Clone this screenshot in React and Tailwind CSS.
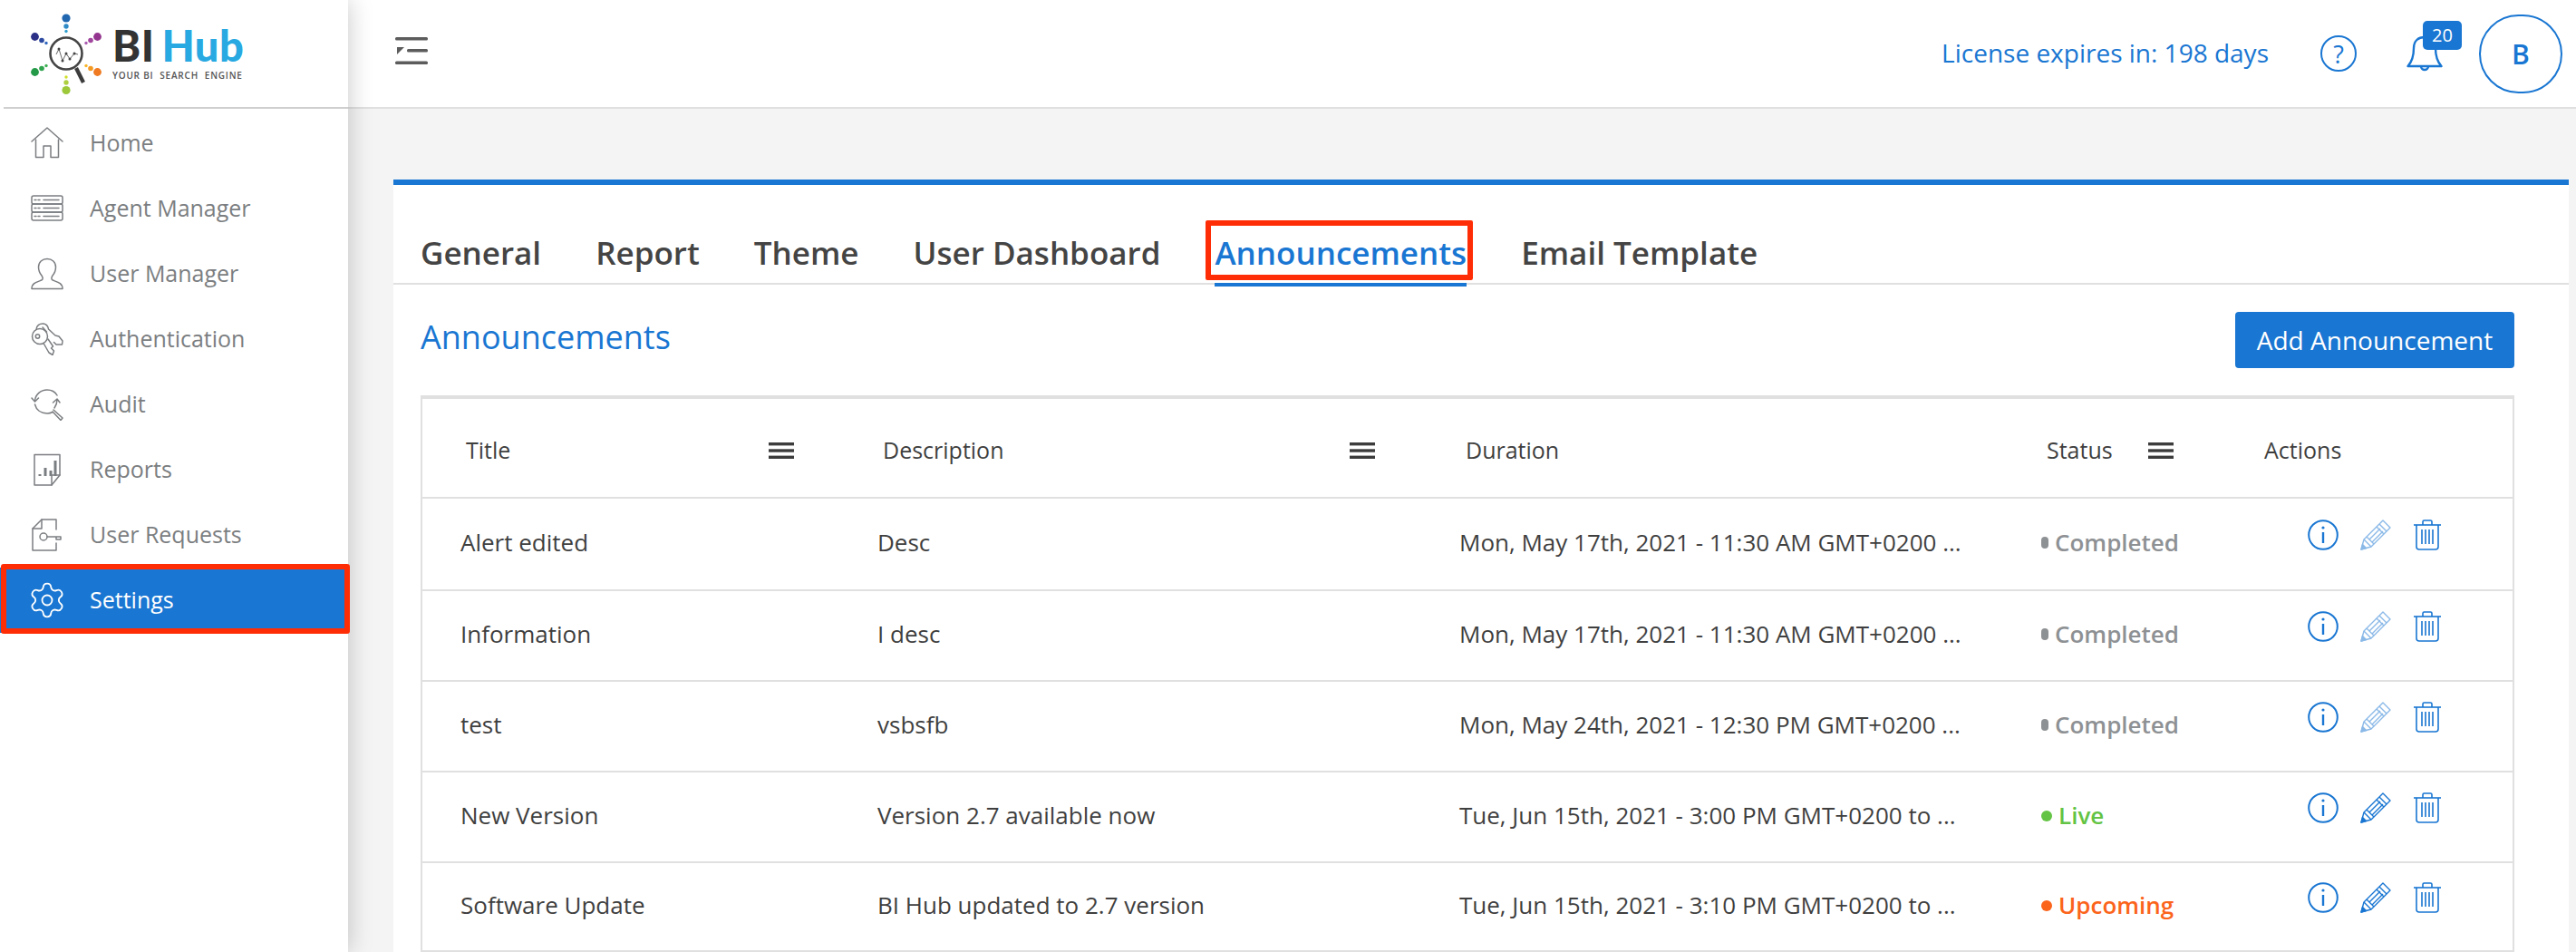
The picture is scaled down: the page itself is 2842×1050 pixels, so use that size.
import React from "react";
import { Settings } from "lucide-react";

const S = { fill: "none", stroke: "#7b7e81", strokeWidth: 1.5, strokeLinecap: "round", strokeLinejoin: "round" };

const Home = () => (
  <svg width="36" height="36" viewBox="0 0 36 36" {...S}>
    <path d="M1 16 L18 1 L35 16" />
    <path d="M5.5 14 V33.5 H14 V21 H22 V33.5 H30.5 V14" />
  </svg>
);
const Agent = () => (
  <svg width="36" height="36" viewBox="0 0 36 36" {...S}>
    <rect x="1" y="4" width="34" height="9" rx="2" />
    <rect x="1" y="13" width="34" height="9" rx="2" />
    <rect x="1" y="22" width="34" height="9" rx="2" />
    <path d="M4 8.5h2M8 8.5h2M14 8.5h17M4 17.5h2M8 17.5h2M14 17.5h17M4 26.5h2M8 26.5h2M14 26.5h17" />
  </svg>
);
const UserI = () => (
  <svg width="36" height="36" viewBox="0 0 36 36" {...S}>
    <path d="M1 34.5 C1 28 7 27 12 25 C13.5 24 13.5 22 12 20 C9.5 17 8.5 14 8.5 10.5 C8.5 5 12.5 1.5 18 1.5 C23.5 1.5 27.5 5 27.5 10.5 C27.5 14 26.5 17 24 20 C22.5 22 22.5 24 24 25 C29 27 35 28 35 34.5 Z" />
  </svg>
);
const Keys = () => (
  <svg width="36" height="36" viewBox="0 0 36 36" {...S}>
    <circle cx="10" cy="15" r="8.5" />
    <circle cx="7.5" cy="15" r="2.2" />
    <path d="M14 22.5 L20 33 L24 35.5 L25.5 31 L22.5 28 L24.5 26 L19 18" />
    <path d="M6 7.5 C6 3 10 0.5 14 1 C17 1.5 19 4 19.5 7 L27 14 L31 15 L35 20 L34.5 24 L28 24 L25.5 21.5" />
    <path d="M13 5 L17.5 10" />
  </svg>
);
const Audit = () => (
  <svg width="36" height="36" viewBox="0 0 36 36" {...S}>
    <path d="M4.5 14 C5 7 11 2 18 2 C23 2 27 4.5 29 8" />
    <path d="M1 11 L4.5 15 L8.5 11" />
    <path d="M4.5 18 C6 24 11 28 18 28 C20 28 22 27.5 24 26.5" />
    <path d="M26 22 C28 19 29 16 29 13" />
    <path d="M24.5 16 L29 12 L32 16" />
    <path d="M25 24 L35 33 L33 35.5 L24 26" />
  </svg>
);
const Reports = () => (
  <svg width="36" height="36" viewBox="0 0 36 36" {...S}>
    <path d="M4 1.5 H32 V24 L23 35 H4 Z" />
    <path d="M32 24 H23 V35" />
    <g strokeWidth="3" strokeLinecap="butt">
      <path d="M10 23v2M16 16v9M22 19v6M27 8v17" />
    </g>
  </svg>
);
const Requests = () => (
  <svg width="36" height="36" viewBox="0 0 36 36" {...S}>
    <path d="M28 12 V1 H12 L2 11 V35 H28 V27" />
    <path d="M12 1 V11 H2" />
    <circle cx="14" cy="20" r="4" />
    <path d="M18 20 H33 V23 H28 V20" />
  </svg>
);

const MiniBars = () => (
  <svg width="28" height="18" viewBox="0 0 28 18" fill="#3c3c3c">
    <rect width="28" height="3.4" y="0" />
    <rect width="28" height="3.4" y="7.3" />
    <rect width="28" height="3.4" y="14.6" />
  </svg>
);

const Info = () => (
  <svg width="34" height="34" viewBox="0 0 34 34" fill="none" stroke="#1976d2" strokeWidth="2">
    <circle cx="17" cy="17" r="15.8" />
    <path d="M17 14v12" strokeWidth="2.4" />
    <circle cx="17" cy="9" r="1.6" fill="#1976d2" stroke="none" />
  </svg>
);
const Pencil = ({ faded }) => (
  <svg width="34" height="34" viewBox="0 0 34 34" fill="none" stroke="#1976d2" strokeWidth="1.4" strokeLinejoin="round" className={faded ? "opacity-50" : ""}>
    <path d="M1 33 L4 22 L25 1 L33 9 L12 30 Z" />
    <path d="M21 5 L29 13 M4 22 L12 30 M7 19 L15 27 M18 8 L26 16 M10 22 L22 10 M13 25 L25 13" />
    <path d="M1 33 L2.5 27.5 L6.5 31.5 Z" fill="#1976d2" />
  </svg>
);
const Trash = () => (
  <svg width="30" height="34" viewBox="0 0 30 34" fill="none" stroke="#1976d2" strokeWidth="1.6" strokeLinejoin="round">
    <path d="M0 6 H30" />
    <path d="M10 6 V2.5 Q10 1 11.5 1 H18.5 Q20 1 20 2.5 V6" />
    <path d="M3 6 V30 Q3 33 6 33 H24 Q27 33 27 30 V6" />
    <path d="M9 11 V27 M13 11 V27 M17 11 V27 M21 11 V27" />
  </svg>
);

const Logo = () => (
  <svg width="82" height="92" viewBox="33 14 82 92" fill="none">
    <circle cx="73" cy="20" r="4.6" fill="#2167b0" />
    <circle cx="73" cy="29" r="2.7" fill="#2f8ac6" />
    <circle cx="73" cy="34.5" r="1.7" fill="#2fa0cf" />
    <circle cx="38.5" cy="40.5" r="4.4" fill="#2b2f86" />
    <circle cx="46" cy="44.5" r="2.8" fill="#2c4aa0" />
    <circle cx="51" cy="47.5" r="1.7" fill="#2f66bd" />
    <circle cx="107.5" cy="40.5" r="4.4" fill="#93358f" />
    <circle cx="100" cy="44.5" r="2.8" fill="#a2479f" />
    <circle cx="95" cy="47.5" r="1.7" fill="#aa5bb0" />
    <circle cx="38.5" cy="79.5" r="4.4" fill="#249a48" />
    <circle cx="46" cy="75.5" r="2.8" fill="#2fa44d" />
    <circle cx="51" cy="72.5" r="1.7" fill="#3eb054" />
    <circle cx="107.5" cy="79.5" r="4.4" fill="#ef7a21" />
    <circle cx="100" cy="75.5" r="2.8" fill="#f39a23" />
    <circle cx="95" cy="72.5" r="1.7" fill="#f7b52a" />
    <circle cx="73" cy="99.5" r="4.6" fill="#9cc83a" />
    <circle cx="73" cy="91" r="2.7" fill="#aed040" />
    <circle cx="73" cy="85" r="1.7" fill="#d0df2a" />
    <circle cx="73" cy="59" r="17.5" stroke="#444" strokeWidth="2.6" />
    <path d="M84 75 L92 91" stroke="#3c3c3c" strokeWidth="4.4" />
    <path d="M62 60 L65 54 L69 67 L73 59 L77 65 L82 59 L86 60" stroke="#555" strokeWidth="0.9" />
    <g fill="#444">
      <circle cx="65" cy="54" r="1.5" /><circle cx="69" cy="67" r="1.5" /><circle cx="73" cy="59" r="1.5" /><circle cx="77" cy="65" r="1.5" /><circle cx="82" cy="59" r="1.5" />
    </g>
  </svg>
);

const nav = [
  ["Home", Home],
  ["Agent Manager", Agent],
  ["User Manager", UserI],
  ["Authentication", Keys],
  ["Audit", Audit],
  ["Reports", Reports],
  ["User Requests", Requests],
];

const tabs = ["General", "Report", "Theme", "User Dashboard", "Announcements", "Email Template"];

const rows = [
  ["Alert edited", "Desc", "Mon, May 17th, 2021 - 11:30 AM GMT+0200 ...", "Completed", true],
  ["Information", "I desc", "Mon, May 17th, 2021 - 11:30 AM GMT+0200 ...", "Completed", true],
  ["test", "vsbsfb", "Mon, May 24th, 2021 - 12:30 PM GMT+0200 ...", "Completed", true],
  ["New Version", "Version 2.7 available now", "Tue, Jun 15th, 2021 - 3:00 PM GMT+0200 to ...", "Live", false],
  ["Software Update", "BI Hub updated to 2.7 version", "Tue, Jun 15th, 2021 - 3:10 PM GMT+0200 to ...", "Upcoming", false],
];

const heights = ["h-[102px]", "h-[100px]", "h-[100px]", "h-[100px]", "h-[98px]"];

const StatusCell = ({ s }) => {
  if (s === "Completed")
    return (
      <div className="flex items-center pl-[42px] text-[26px] font-semibold text-[#8e9194]">
        <span className="w-[8px] h-[13px] rounded-full bg-[#8e9194] mr-[7px]" />
        {s}
      </div>
    );
  const text = s === "Live" ? "text-[#63c344]" : "text-[#fb641b]";
  const bg = s === "Live" ? "bg-[#63c344]" : "bg-[#fb641b]";
  return (
    <div className={`flex items-center pl-[42px] text-[26px] font-semibold ${text}`}>
      <span className={`w-[12px] h-[12px] rounded-full mr-[7px] ${bg}`} />
      {s}
    </div>
  );
};

export default function App() {
  return (
    <div className="flex w-[2842px] h-[1050px] overflow-hidden bg-[#f4f4f4] font-['Open_Sans',sans-serif]">
      <aside className="relative z-10 w-[384px] shrink-0 bg-white shadow-[0_0_26px_rgba(0,0,0,0.22)]">
        <div className="ml-[4px] h-[120px] border-b-2 border-[#cfcfcf] flex items-start">
          <div className="ml-[29px] mt-[14px]"><Logo /></div>
          <div className="ml-[9px] mt-[24px]">
            <div className="font-['Lato',sans-serif] font-black text-[47px] leading-[52px] tracking-[0.5px] whitespace-nowrap">
              <span className="text-[#333333]">BI</span>
              <span className="text-[#29a9e1] ml-[8px]">Hub</span>
            </div>
            <div className="text-[10px] leading-[14px] tracking-[0.8px] text-[#555] whitespace-nowrap font-semibold">YOUR BI&nbsp; SEARCH&nbsp; ENGINE</div>
          </div>
        </div>
        <nav className="pt-[2px]">
          {nav.map(([label, Icon]) => (
            <div key={label} className="h-[72px] flex items-center pl-[34px] text-[25px] text-[#7b7e81]">
              <span className="w-[36px] flex justify-center"><Icon /></span>
              <span className="ml-[29px]">{label}</span>
            </div>
          ))}
          <div className="relative h-[72px] flex items-center pl-[34px] text-[25px] text-white bg-[#1976d2]">
            <span className="w-[36px] flex justify-center"><Settings size={44} strokeWidth={1} className="shrink-0" /></span>
            <span className="ml-[29px]">Settings</span>
            <div className="absolute top-[-4px] bottom-[-1px] left-[1px] right-[-2px] border-[6px] border-[#ff2d05] rounded-[3px]" />
          </div>
        </nav>
      </aside>

      <div className="flex-1 min-w-0">
        <header className="h-[120px] bg-white border-b-2 border-[#e0e0e0] flex items-center pl-[52px]">
          <svg width="36" height="30" viewBox="0 0 36 30" fill="#5c5c5c" className="-mt-[6px]">
            <rect width="36" height="3.6" y="0" rx="1.5" />
            <rect width="23" height="3.6" x="13" y="13" rx="1.5" />
            <rect width="36" height="3.6" y="26.4" rx="1.5" />
            <path d="M2 11 H10 L2 19 Z" />
          </svg>
          <div className="ml-auto flex items-center text-[#1976d2]">
            <span className="text-[28px] -mt-[2px]">License expires in: 198 days</span>
            <span className="relative ml-[57px] w-[40px] h-[40px] rounded-full border-[2.5px] border-[#1976d2] flex items-center justify-center text-[27px] font-medium leading-none">?</span>
            <span className="relative ml-[55px] w-[40px] h-[40px]">
              <svg width="40" height="40" viewBox="0 0 40 40" fill="none" stroke="#1976d2" strokeWidth="2.4" strokeLinejoin="round">
                <path d="M1.5 34 C7 28 8 20 8 14 C8 6 13 2 20 2 C27 2 32 6 32 14 C32 20 33 28 38.5 34 Z" />
                <path d="M16 34 a4 4 0 0 0 8 0" />
              </svg>
              <span className="absolute left-[18px] top-[-16px] w-[43px] h-[32px] rounded-[5px] bg-[#1976d2] text-white text-[20px] leading-[32px] text-center">20</span>
            </span>
            <span className="ml-[40px] mr-[15px] w-[92px] h-[87px] rounded-full border-2 border-[#1976d2] flex items-center justify-center text-[30px] font-semibold">B</span>
          </div>
        </header>

        <main className="pt-[78px] pl-[50px] pr-[8px]">
          <section className="bg-white border-t-[6px] border-[#1976d2]">
            <div className="h-[110px] pl-[30px] border-b-2 border-[#e0e0e0] flex items-end gap-[60px] text-[35px] font-semibold text-[#444444]">
              {tabs.map((t) =>
                t === "Announcements" ? (
                  <div key={t} className="relative h-[70px] flex items-center text-[#1976d2] -mb-[4px] border-b-4 border-[#1976d2]">
                    {t}
                    <div className="absolute top-[-3px] bottom-[3px] left-[-10px] right-[-7px] border-[6px] border-[#ff2d05] rounded-[2px]" />
                  </div>
                ) : (
                  <div key={t} className="h-[66px] flex items-center">{t}</div>
                )
              )}
            </div>

            <div className="flex items-center justify-between pl-[30px] pr-[60px] pt-[30px] pb-[30px]">
              <h2 className="text-[36px] text-[#1976d2] -mt-[6px]">Announcements</h2>
              <button className="w-[308px] h-[62px] rounded-[4px] bg-[#1976d2] text-white text-[28px]">Add Announcement</button>
            </div>

            <div className="ml-[30px] mr-[60px] border-t-4 border-x-2 border-[#e0e0e0] text-[#3f3f3f]">
              <div className="grid grid-cols-[462px_642px_640px_242px_1fr] h-[110px] pt-[5px] items-center border-b-2 border-[#e0e0e0] text-[25px] font-medium">
                <div className="flex items-center justify-between pl-[48px] pr-[52px]"><span>Title</span><MiniBars /></div>
                <div className="flex items-center justify-between pl-[46px] pr-[53px]"><span>Description</span><MiniBars /></div>
                <div className="pl-[47px]">Duration</div>
                <div className="flex items-center justify-between pl-[48px] pr-[54px]"><span>Status</span><MiniBars /></div>
                <div className="pl-[46px]">Actions</div>
              </div>
              {rows.map(([a, b, c, d, faded], i) => (
                <div key={a} className={`grid grid-cols-[462px_642px_640px_242px_1fr] ${heights[i]} pb-[3px] items-center border-b-2 border-[#e0e0e0] text-[26px]`}>
                  <div className="pl-[42px]">{a}</div>
                  <div className="pl-[40px]">{b}</div>
                  <div className="pl-[40px] whitespace-nowrap">{c}</div>
                  <StatusCell s={d} />
                  <div className="pl-[94px] flex items-center gap-[24px] -mt-[17px]">
                    <Info />
                    <Pencil faded={faded} />
                    <span className="ml-[1px]"><Trash /></span>
                  </div>
                </div>
              ))}
            </div>
          </section>
        </main>
      </div>
    </div>
  );
}
